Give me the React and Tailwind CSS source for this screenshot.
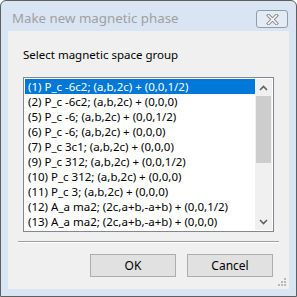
import React from "react";

const items = [
  "(1) P_c -6c2; (a,b,2c) + (0,0,1/2)",
  "(2) P_c -6c2; (a,b,2c) + (0,0,0)",
  "(5) P_c -6; (a,b,2c) + (0,0,1/2)",
  "(6) P_c -6; (a,b,2c) + (0,0,0)",
  "(7) P_c 3c1; (a,b,2c) + (0,0,0)",
  "(9) P_c 312; (a,b,2c) + (0,0,1/2)",
  "(10) P_c 312; (a,b,2c) + (0,0,0)",
  "(11) P_c 3; (a,b,2c) + (0,0,0)",
  "(12) A_a ma2; (2c,a+b,-a+b) + (0,0,1/2)",
  "(13) A_a ma2; (2c,a+b,-a+b) + (0,0,0)",
];

const font = { fontFamily: '"Noto Sans", "Open Sans", sans-serif' };

export default function App() {
  return (
    <div
      className="w-[297px] h-[297px] border border-[#5f5f5f] rounded-t-[6px] bg-[#d9e5f3] flex flex-col overflow-hidden"
      style={font}
    >
      {/* title bar */}
      <div className="h-[30px] flex items-start justify-between pl-[11px] pr-[8px]">
        <div className="text-[13.3px] text-[#a0a0a0] leading-[16px] mt-[9px]">
          Make new magnetic phase
        </div>
        <div className="mt-[9px] w-[32px] h-[18px] border border-[#8e9cac] rounded-[3px] bg-[#e3ebf4] flex items-center justify-center">
          <svg width="13" height="11" viewBox="0 0 13 11">
            <path d="M2.5 1.5 L10.5 9.5 M10.5 1.5 L2.5 9.5" stroke="#8a8a8a" strokeWidth="3.4" strokeLinecap="square" />
            <path d="M2.5 1.5 L10.5 9.5 M10.5 1.5 L2.5 9.5" stroke="#ffffff" strokeWidth="1.5" strokeLinecap="square" />
          </svg>
        </div>
      </div>
      {/* client */}
      <div className="flex-1 mx-[7px] mb-[7px] bg-[#f0f0f0] flex flex-col relative">
        <div className="text-[11.5px] text-black leading-[16px] mt-[16px] ml-[15px]">
          Select magnetic space group
        </div>
        <div className="mt-[14px] ml-[15px] w-[251px] h-[155px] border border-[#828790] bg-white flex p-[1px]">
          <div className="flex-1 flex flex-col">
            {items.map((t, i) => (
              <div
                key={i}
                className={
                  "h-[15px] leading-[15px] text-[11.5px] pl-[3px] whitespace-nowrap overflow-hidden " +
                  (i === 0 ? "bg-[#0078d7] text-white" : "text-black")
                }
              >
                {t}
              </div>
            ))}
          </div>
          <div className="w-[17px] bg-[#f0f0f0] flex flex-col">
            <div className="h-[17px] flex items-center justify-center">
              <svg width="9" height="6" viewBox="0 0 9 6">
                <path d="M1 5 L4.5 1.5 L8 5" stroke="#606060" strokeWidth="1.6" fill="none" />
              </svg>
            </div>
            <div className="h-[67px] mx-[1px] bg-[#cdcdcd]" />
            <div className="flex-1" />
            <div className="h-[17px] flex items-center justify-center">
              <svg width="9" height="6" viewBox="0 0 9 6">
                <path d="M1 1 L4.5 4.5 L8 1" stroke="#606060" strokeWidth="1.6" fill="none" />
              </svg>
            </div>
          </div>
        </div>
        <div className="mt-[9px] mx-[10px] h-[2px] border-t border-[#a0a0a0] border-b border-b-white" />
        <div className="mt-[11px] flex justify-end gap-[11px] mr-[16px]">
          <div className="w-[86px] h-[23px] border border-[#adadad] bg-[#e1e1e1] text-[12px] flex items-center justify-center text-black">
            OK
          </div>
          <div className="w-[86px] h-[23px] border border-[#adadad] bg-[#e1e1e1] text-[12px] flex items-center justify-center text-black">
            Cancel
          </div>
        </div>
        <svg className="absolute right-[3px] bottom-[3px]" width="8" height="8" viewBox="0 0 8 8">
          {[[6,0],[3,3],[6,3],[0,6],[3,6],[6,6]].map(([x,y],k)=>(
            <rect key={k} x={x} y={y} width="2" height="2" fill="#b8b8b8" />
          ))}
        </svg>
      </div>
    </div>
  );
}
